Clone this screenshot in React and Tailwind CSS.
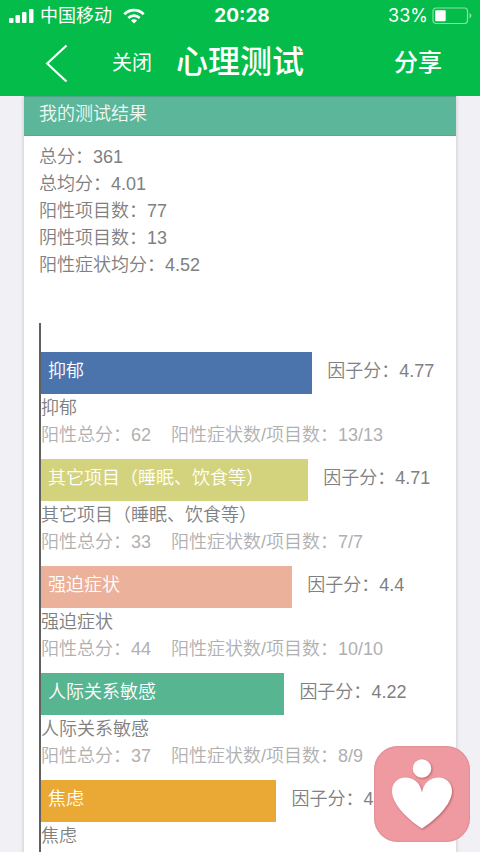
const FACTORS = [
  { name: '抑郁', score: '4.77', total: 62, ratio: '13/13', bar: 'w-[68%] bg-[#4b74ad]' },
  { name: '其它项目（睡眠、饮食等）', score: '4.71', total: 33, ratio: '7/7', bar: 'w-[67%] bg-[#d4d37d]' },
  { name: '强迫症状', score: '4.4', total: 44, ratio: '10/10', bar: 'w-[63%] bg-[#ebb19a]' },
  { name: '人际关系敏感', score: '4.22', total: 37, ratio: '8/9', bar: 'w-[61%] bg-[#58b591]' },
  { name: '焦虑', score: '4', bar: 'w-[59%] bg-[#eaa935]' },
];

const SUMMARY = [
  ['总分', '361'],
  ['总均分', '4.01'],
  ['阳性项目数', '77'],
  ['阴性项目数', '13'],
  ['阳性症状均分', '4.52'],
];

function StatusBar() {
  return (
    <div className="grid h-8 grid-cols-3 items-center pl-2 pr-2 text-lg leading-8">
      <div className="flex items-center whitespace-nowrap">
        <svg className="mr-1 h-4 w-7 shrink-0" viewBox="0 0 28 16" fill="currentColor" aria-hidden="true">
          <rect x="1" y="10" width="4.5" height="5" rx="1" />
          <rect x="7.5" y="7" width="4.5" height="8" rx="1" />
          <rect x="14" y="4" width="4.5" height="11" rx="1" />
          <rect x="21" y="1" width="4.5" height="14" rx="1" />
        </svg>
        中国移动
        <svg className="ml-2.5 h-4 w-6 shrink-0" viewBox="0 0 24 16" fill="none" stroke="currentColor" strokeWidth="2.7" aria-hidden="true">
          <path d="M2.3 6.2C7.8.8 16.2.8 21.7 6.2" />
          <path d="M6.3 10C9.5 6.9 14.5 6.9 17.7 10" />
          <path d="M8.9 12.5C10.7 10.9 13.3 10.9 15.1 12.5L12 15.6Z" fill="currentColor" stroke="none" />
        </svg>
      </div>
      <div className="pl-1 text-center font-[Inter,sans-serif] text-[19px] font-bold">20:28</div>
      <div className="flex items-center justify-end gap-1 font-[Inter,sans-serif]">
        33%
        <svg className="h-[18px] w-10" viewBox="0 0 40 18" fill="none" aria-hidden="true">
          <rect x="1" y="1" width="34.5" height="15.5" rx="3" stroke="#8be0a8" strokeWidth="1.2" />
          <rect x="3.2" y="3.2" width="10.5" height="11" rx="1" fill="white" />
          <path d="M37.5 6v5.5q2-1 2-2.75t-2-2.75z" fill="#8be0a8" />
        </svg>
      </div>
    </div>
  );
}

function NavBar() {
  return (
    <nav className="grid h-16 grid-cols-[1fr_auto_1fr] items-center pb-0.5">
      <div className="flex items-center">
        <button type="button" aria-label="返回" className="ml-11 mr-11">
          <svg className="h-10 w-6" viewBox="0 0 24 40" fill="none" stroke="currentColor" strokeWidth="2.2" aria-hidden="true">
            <path d="M22.5 2.5 3.2 20.5 22.5 38.5" />
          </svg>
        </button>
        <button type="button" className="whitespace-nowrap text-xl">关闭</button>
      </div>
      <h1 className="pb-0.5 text-[32px] font-medium leading-10">心理测试</h1>
      <button type="button" className="mr-[38px] justify-self-end text-2xl font-medium">分享</button>
    </nav>
  );
}

function Factor({ name, score, total, ratio, bar }) {
  return (
    <li>
      <div className="flex whitespace-nowrap">
        <div className={`h-[42px] shrink-0 pl-[7px] pt-1.5 text-white ${bar}`}>{name}</div>
        <div className="pl-[15px] pt-1.5">因子分：{score}</div>
      </div>
      <h3 className="pt-px">{name}</h3>
      {ratio && (
        <div className="flex gap-5 whitespace-nowrap text-[#b0b0b0]">
          <span>阳性总分：{total}</span>
          <span>阳性症状数/项目数：{ratio}</span>
        </div>
      )}
    </li>
  );
}

export default function App() {
  return (
    <div className="relative flex h-screen flex-col overflow-hidden bg-[#f1f0f5] font-['Liberation_Sans','Noto_Sans_CJK_SC',sans-serif]">
      <header className="shrink-0 bg-[#04bc49] text-white">
        <StatusBar />
        <NavBar />
      </header>
      <main className="flex min-h-0 flex-1 flex-col overflow-hidden px-6">
        <section className="flex-1 bg-white text-lg font-[350] leading-[27px] text-[#808080] shadow-[0_0_4px_rgba(0,0,0,0.2)]">
          <h2 className="h-10 border-b border-t border-b-[#55aa8d] border-t-[#4fa386] bg-[#5cb699] px-[15px] pt-1 text-[#f0faf5]">我的测试结果</h2>
          <div className="pl-[15px] pr-4 pt-2">
            {SUMMARY.map(([label, value]) => (
              <p key={label}>{label}：{value}</p>
            ))}
            <ul className="mt-11 flex flex-col gap-2.5 border-l-2 border-[#606060] pb-8 pt-[29px]">
              {FACTORS.map((factor) => (
                <Factor key={factor.name} {...factor} />
              ))}
            </ul>
          </div>
        </section>
      </main>
      <button type="button" aria-label="心理关怀" className="absolute bottom-2.5 right-2.5 h-24 w-24 rounded-[24px] bg-[#ef9aa1] shadow-[inset_0_0_2px_#c57880]">
        <svg className="h-24 w-24" viewBox="0 0 96 96" fill="white" aria-hidden="true">
          <g className="drop-shadow-[1px_1px_1px_rgba(150,60,75,0.6)]">
            <circle cx="48" cy="22.5" r="9.3" />
            <path d="M48 82.5C36 75 18 59 18 45 18 37 24 31.500 31 31.500 40 31.500 46.500 37 48 46.500 49.500 37 56 31.500 65 31.500 72 31.500 78 37 78 45 78 59 60 75 48 82.500Z" />
          </g>
        </svg>
      </button>
    </div>
  );
}
